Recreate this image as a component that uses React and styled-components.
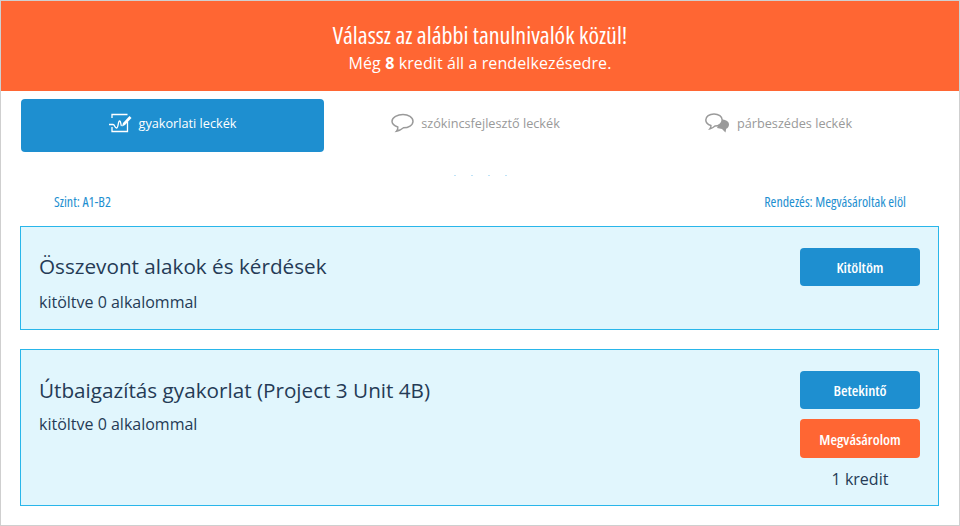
import React from 'react';
import styled, { createGlobalStyle } from 'styled-components';

const GlobalStyle = createGlobalStyle`
  html, body { margin: 0; padding: 0; background: #fff; }
  body { font-family: "Open Sans", "Noto Sans", sans-serif; overflow: hidden; }
  * { box-sizing: border-box; }
`;

const narrow = `"Open Sans", "Noto Sans", sans-serif`;

const Page = styled.div`
  width: 960px;
  height: 526px;
  border: 1px solid #cfcfcf;
  overflow: hidden;
  background: #fff;
`;

const Banner = styled.header`
  height: 90px;
  background: #ff6633;
  color: #fff;
  text-align: center;
  padding-top: 19px;
`;

const BannerTitle = styled.h1`
  margin: 0;
  font-family: ${narrow};
  font-stretch: 75%;
  font-size: 24px;
  line-height: 30px;
  font-weight: 400;
`;

const BannerSub = styled.p`
  margin: 1px 0 0;
  font-size: 16px;
  line-height: 24px;
  letter-spacing: 0.1px;
`;

const Tabs = styled.nav`
  display: grid;
  grid-template-columns: repeat(3, 303px);
  padding: 8px 0 0 20px;
`;

const Tab = styled.div`
  height: 53px;
  border-radius: 4px;
  display: flex;
  align-items: center;
  justify-content: center;
  gap: 7px;
  padding-bottom: 5px;
  font-size: 12.7px;
  background: ${p => (p.$active ? '#1e8fd0' : 'transparent')};
  color: ${p => (p.$active ? '#fff' : '#999')};
`;

const Specks = styled.div`
  display: flex;
  justify-content: center;
  gap: 15px;
  height: 2px;
  margin-top: 23px;
`;

const Speck = styled.i`
  width: 2px;
  height: 1px;
  background: #bfe3f7;
`;

const Filters = styled.div`
  display: flex;
  justify-content: space-between;
  padding: 16px 53px 0 53px;
  font-family: ${narrow};
  font-stretch: 75%;
  font-size: 14px;
  line-height: 18px;
  color: #1e8fd0;
`;

const Cards = styled.main`
  display: flex;
  flex-direction: column;
  gap: 19px;
  padding: 15px 20px 0 19px;
`;

const Card = styled.section`
  height: ${p => p.$height}px;
  border: 1px solid #29b6ea;
  background: #e1f6fd;
  display: flex;
  justify-content: space-between;
  padding: ${p => p.$pad}px 18px 0 18px;
`;

const CardTitle = styled.h2`
  margin: 0;
  font-size: 20.7px;
  line-height: 28px;
  font-weight: 400;
  color: #253b56;
`;

const CardMeta = styled.p`
  margin: ${p => p.$gap}px 0 0;
  font-size: 16px;
  line-height: 22px;
  color: #253b56;
`;

const Actions = styled.div`
  width: 120px;
  display: flex;
  flex-direction: column;
  gap: 10px;
  margin-top: ${p => p.$top}px;
`;

const Button = styled.button`
  width: 120px;
  height: ${p => (p.$buy ? 39 : 38)}px;
  border: 0;
  border-radius: 4px;
  padding: 0;
  font-family: ${narrow};
  font-stretch: 75%;
  font-size: 15px;
  font-weight: 600;
  color: #fff;
  background: ${p => (p.$buy ? '#ff6633' : '#1e8fd0')};
`;

const Price = styled.div`
  text-align: center;
  font-size: 16px;
  line-height: 22px;
  color: #253b56;
`;

const PracticeIcon = () => (
  <svg width="23" height="20" viewBox="0 0 23 20" fill="none" stroke="#fff" strokeWidth="1.3">
    <path d="M3 5V1.500h15.500M18.500 9v9.500H3V14" />
    <path d="M0 11.500h4c2 0 1.500 3.500 3.500 3.500S9 8 10.500 8s1.200 4 2 5" />
    <path d="M13 13.500l1-3.500L20.500 3l2 2L16 12z" fill="#fff" stroke="none" />
  </svg>
);

const BubbleIcon = () => (
  <svg width="23" height="20" viewBox="0 0 23 20" fill="none" stroke="#9a9a9a" strokeWidth="1.500">
    <path d="M12 1.500c5.300 0 10 2.700 10 6.800 0 4-4.700 6.500-9.500 6.500-2 1.700-4.500 3-7 3.400 1-1.100 1.500-2.500 1.300-4.200C3.300 12.800 1 11 1 8.300 1 4.200 6.700 1.500 12 1.500z" />
  </svg>
);

const DoubleBubbleIcon = () => (
  <svg width="25" height="20" viewBox="0 0 25 20">
    <path d="M16 6.500c4.500 0 8 1.500 8 5 0 2.300-1.300 3.700-2.800 4.300L20.500 19.500 17 16l-5-1z" fill="#9a9a9a" />
    <path d="M9 1c4.600 0 8.200 2.500 8.200 6S13.800 13 10 13c-1.400 1.300-3 2.300-5 2.800.7-.9 1-2 .9-3.300C2.800 11.500.8 9.600.8 7 .8 3.500 4.400 1 9 1z" fill="#fff" stroke="#9a9a9a" strokeWidth="1.500" />
  </svg>
);

export default function App() {
  return (
    <Page>
      <GlobalStyle />
      <Banner>
        <BannerTitle>Válassz az alábbi tanulnivalók közül!</BannerTitle>
        <BannerSub>Még <b>8</b> kredit áll a rendelkezésedre.</BannerSub>
      </Banner>
      <Tabs>
        <Tab $active><PracticeIcon />gyakorlati leckék</Tab>
        <Tab><BubbleIcon />szókincsfejlesztő leckék</Tab>
        <Tab><DoubleBubbleIcon />párbeszédes leckék</Tab>
      </Tabs>
      <Specks><Speck /><Speck /><Speck /><Speck /></Specks>
      <Filters>
        <span>Szint: A1-B2</span>
        <span>Rendezés: Megvásároltak elöl</span>
      </Filters>
      <Cards>
        <Card $height={104} $pad={25}>
          <div>
            <CardTitle>Összevont alakok és kérdések</CardTitle>
            <CardMeta $gap={11}>kitöltve 0 alkalommal</CardMeta>
          </div>
          <Actions $top={-4}>
            <Button>Kitöltöm</Button>
          </Actions>
        </Card>
        <Card $height={157} $pad={26}>
          <div>
            <CardTitle>Útbaigazítás gyakorlat (Project 3 Unit 4B)</CardTitle>
            <CardMeta $gap={9}>kitöltve 0 alkalommal</CardMeta>
          </div>
          <Actions $top={-5}>
            <Button>Betekintő</Button>
            <Button $buy>Megvásárolom</Button>
            <Price>1 kredit</Price>
          </Actions>
        </Card>
      </Cards>
    </Page>
  );
}
